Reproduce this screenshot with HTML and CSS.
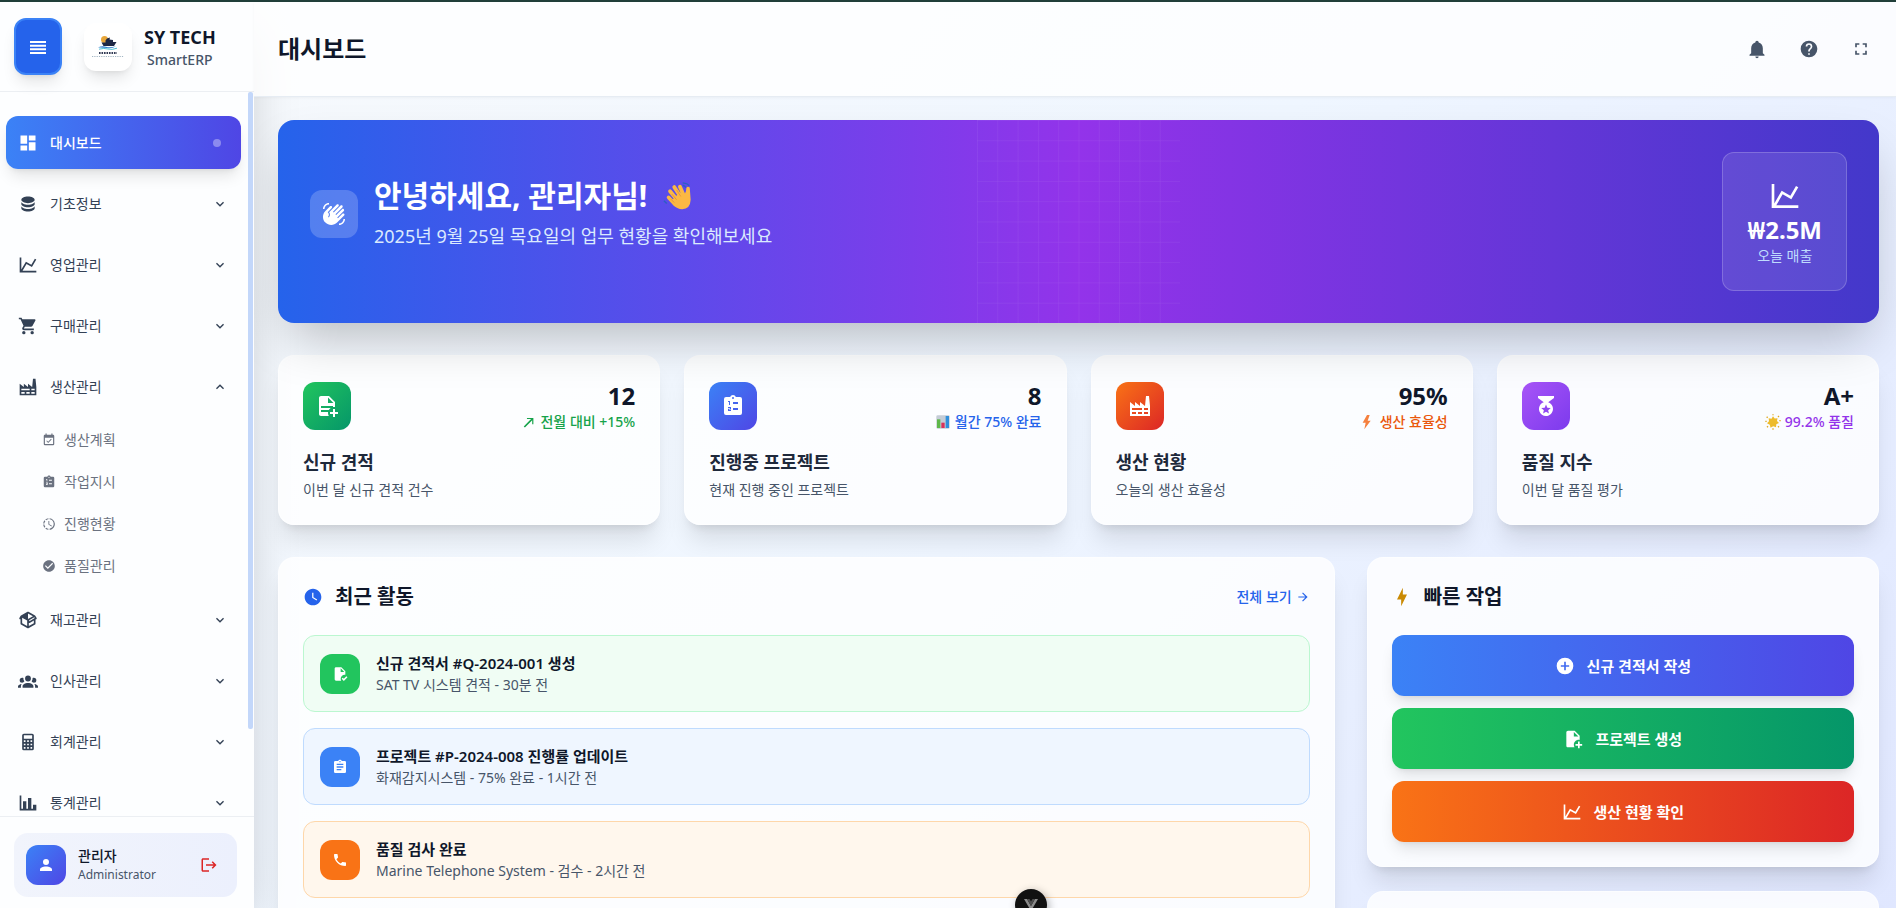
FILE: index.html
```html
<!DOCTYPE html>
<html lang="ko">
<head>
<meta charset="utf-8">
<title>SY TECH SmartERP</title>
<link rel="stylesheet" href="styles.css">
</head>
<body>
<svg class="sprite" aria-hidden="true">
  <symbol id="menu" viewBox="0 0 24 24"><path d="M0 3H24V6H0ZM0 8.500H24V11.500H0ZM0 14H24V17H0ZM0 19.500H24V22.500H0Z"/></symbol>
  <symbol id="dashboard" viewBox="0 0 24 24"><path d="M13,3V9H21V3M13,21H21V11H13M3,21H11V15H3M3,13H11V3H3V13Z"/></symbol>
  <symbol id="database" viewBox="0 0 24 24"><path d="M12,3C7.58,3 4,4.79 4,7C4,9.21 7.58,11 12,11C16.42,11 20,9.21 20,7C20,4.79 16.42,3 12,3M4,9V12C4,14.21 7.58,16 12,16C16.42,16 20,14.21 20,12V9C20,11.21 16.42,13 12,13C7.58,13 4,11.21 4,9M4,14V17C4,19.21 7.58,21 12,21C16.42,21 20,19.21 20,17V14C20,16.21 16.42,18 12,18C7.58,18 4,16.21 4,14Z"/></symbol>
  <symbol id="chart-line" viewBox="0 0 24 24"><path d="M16,11.78L20.24,4.45L21.97,5.45L16.74,14.5L10.23,10.75L5.46,19H22V21H2V3H4V17.54L9.5,8L16,11.78Z"/></symbol>
  <symbol id="cart" viewBox="0 0 24 24"><path d="M17,18C15.89,18 15,18.89 15,20A2,2 0 0,0 17,22A2,2 0 0,0 19,20C19,18.89 18.1,18 17,18M1,2V4H3L6.6,11.59L5.24,14.04C5.09,14.32 5,14.65 5,15A2,2 0 0,0 7,17H19V15H7.42A0.25,0.25 0 0,1 7.17,14.75C7.17,14.7 7.18,14.66 7.2,14.63L8.1,13H15.55C16.3,13 16.96,12.58 17.3,11.97L20.88,5.5C20.95,5.34 21,5.17 21,5A1,1 0 0,0 20,4H5.21L4.27,2M7,18C5.89,18 5,18.89 5,20A2,2 0 0,0 7,22A2,2 0 0,0 9,20C9,18.89 8.1,18 7,18Z"/></symbol>
  <symbol id="factory" viewBox="0 0 24 24"><path d="M4,18V20H8V18H4M4,14V16H14V14H4M10,18V20H14V18H10M16,14V16H20V14H16M16,18V20H20V18H16M2,22V8L7,12V8L12,12V8L17,12L18,2H21L22,12V22H2Z"/></symbol>
  <symbol id="calendar-check" viewBox="0 0 24 24"><path d="M19,19H5V8H19M19,3H18V1H16V3H8V1H6V3H5C3.89,3 3,3.9 3,5V19A2,2 0 0,0 5,21H19A2,2 0 0,0 21,19V5A2,2 0 0,0 19,3M16.53,11.06L15.47,10L10.59,14.88L8.47,12.76L7.41,13.82L10.59,17L16.53,11.06Z"/></symbol>
  <symbol id="clipboard-list" viewBox="0 0 24 24"><path fill-rule="evenodd" d="M19,3H14.82C14.4,1.84 13.3,1 12,1C10.7,1 9.6,1.84 9.18,3H5A2,2 0 0,0 3,5V19A2,2 0 0,0 5,21H19A2,2 0 0,0 21,19V5A2,2 0 0,0 19,3M12,3A1,1 0 0,1 13,4A1,1 0 0,1 12,5A1,1 0 0,1 11,4A1,1 0 0,1 12,3M7,7H9V11H8V8H7ZM7,13H10V15.5H8V16H10V17H7V14.800H9V14H7ZM12,8H17V10H12ZM12,14H17V16H12Z"/></symbol>
  <symbol id="progress-clock" viewBox="0 0 24 24"><path d="M13,2.03V2.05L13,4.05C17.39,4.59 20.5,8.58 19.96,12.97C19.5,16.61 16.64,19.5 13,19.93V21.93C18.5,21.38 22.5,16.5 21.95,11C21.5,6.25 17.73,2.5 13,2.03M11,2.06C9.05,2.25 7.19,3 5.67,4.26L7.1,5.74C8.22,4.84 9.57,4.26 11,4.06V2.06M4.26,5.67C3,7.19 2.25,9.04 2.05,11H4.05C4.24,9.58 4.8,8.23 5.69,7.1L4.26,5.67M2.06,13C2.26,14.96 3.03,16.81 4.27,18.33L5.69,16.9C4.81,15.77 4.24,14.42 4.06,13H2.06M7.1,18.37L5.67,19.74C7.18,21 9.04,21.79 11,22V20C9.58,19.82 8.23,19.25 7.1,18.37M12.5,7V12.25L17,14.92L16.25,16.15L11,13V7H12.5Z"/></symbol>
  <symbol id="check-circle" viewBox="0 0 24 24"><path d="M12 2C6.5 2 2 6.5 2 12S6.5 22 12 22 22 17.5 22 12 17.5 2 12 2M10 17L5 12L6.41 10.59L10 14.17L17.59 6.58L19 8L10 17Z"/></symbol>
  <symbol id="package" viewBox="0 0 24 24"><path d="M2,10.96C1.5,10.68 1.35,10.07 1.63,9.59L3.13,7C3.24,6.8 3.41,6.66 3.6,6.58L11.43,2.18C11.59,2.06 11.79,2 12,2C12.21,2 12.41,2.06 12.57,2.18L20.47,6.62C20.66,6.72 20.82,6.88 20.91,7.08L22.36,9.6C22.64,10.08 22.47,10.69 22,10.96L21,11.54V16.5C21,16.88 20.79,17.21 20.47,17.38L12.57,21.82C12.41,21.94 12.21,22 12,22C11.79,22 11.59,21.94 11.43,21.82L3.53,17.38C3.21,17.21 3,16.88 3,16.5V10.96C2.7,11.13 2.32,11.14 2,10.96M12,4.15V4.15L12,10.85V10.85L17.96,7.5L12,4.15M5,15.91L11,19.29V12.58L5,9.21V15.91M19,15.91V12.69L14,15.59C13.67,15.77 13.3,15.76 13,15.6V19.29L19,15.91M13.85,13.36L20.13,9.73L19.55,8.72L13.27,12.35L13.85,13.36Z"/></symbol>
  <symbol id="account-group" viewBox="0 0 24 24"><path d="M12,5.5A3.5,3.5 0 0,1 15.5,9A3.5,3.5 0 0,1 12,12.5A3.5,3.5 0 0,1 8.5,9A3.5,3.5 0 0,1 12,5.5M5,8C5.56,8 6.08,8.15 6.53,8.42C6.38,9.85 6.8,11.27 7.66,12.38C7.16,13.34 6.16,14 5,14A3,3 0 0,1 2,11A3,3 0 0,1 5,8M19,8A3,3 0 0,1 22,11A3,3 0 0,1 19,14C17.84,14 16.84,13.34 16.34,12.38C17.2,11.27 17.62,9.85 17.47,8.42C17.92,8.15 18.44,8 19,8M5.5,18.25C5.5,16.18 8.41,14.5 12,14.5C15.59,14.5 18.5,16.18 18.5,18.25V20H5.5V18.25M0,20V18.5C0,17.11 1.89,15.94 4.45,15.6C3.86,16.28 3.5,17.22 3.5,18.25V20H0M24,20H20.5V18.25C20.5,17.22 20.14,16.28 19.55,15.6C22.11,15.94 24,17.11 24,18.5V20Z"/></symbol>
  <symbol id="calculator" viewBox="0 0 24 24"><path d="M7,2H17A2,2 0 0,1 19,4V20A2,2 0 0,1 17,22H7A2,2 0 0,1 5,20V4A2,2 0 0,1 7,2M7,4V8H17V4H7M7,10V12H9V10H7M11,10V12H13V10H11M15,10V12H17V10H15M7,14V16H9V14H7M11,14V16H13V14H11M15,14V16H17V14H15M7,18V20H9V18H7M11,18V20H13V18H11M15,18V20H17V18H15Z"/></symbol>
  <symbol id="chart-bar" viewBox="0 0 24 24"><path d="M22,21H2V3H4V19H6V10H10V19H12V6H16V19H18V14H22V21Z"/></symbol>
  <symbol id="chevron-down" viewBox="0 0 24 24"><path d="M7.41,8.58L12,13.17L16.59,8.58L18,10L12,16L6,10L7.41,8.58Z"/></symbol>
  <symbol id="chevron-up" viewBox="0 0 24 24"><path d="M7.41,15.41L12,10.83L16.59,15.41L18,14L12,8L6,14L7.41,15.41Z"/></symbol>
  <symbol id="account" viewBox="0 0 24 24"><path d="M12,4A4,4 0 0,1 16,8A4,4 0 0,1 12,12A4,4 0 0,1 8,8A4,4 0 0,1 12,4M12,14C16.42,14 20,15.79 20,18V20H4V18C4,15.79 7.58,14 12,14Z"/></symbol>
  <symbol id="logout" viewBox="0 0 24 24"><path d="M17 7L15.59 8.41L18.17 11H8V13H18.17L15.59 15.58L17 17L22 12M4 5H12V3H4C2.9 3 2 3.9 2 5V19C2 20.1 2.9 21 4 21H12V19H4V5Z"/></symbol>
  <symbol id="bell" viewBox="0 0 24 24"><path d="M21,19V20H3V19L5,17V11C5,7.9 7.03,5.17 10,4.29C10,4.19 10,4.1 10,4A2,2 0 0,1 12,2A2,2 0 0,1 14,4C14,4.1 14,4.19 14,4.29C16.97,5.17 19,7.9 19,11V17L21,19M14,21A2,2 0 0,1 12,23A2,2 0 0,1 10,21"/></symbol>
  <symbol id="help" viewBox="0 0 24 24"><path d="M15.07,11.25L14.17,12.17C13.45,12.89 13,13.5 13,15H11V14.5C11,13.39 11.45,12.39 12.17,11.67L13.41,10.41C13.78,10.05 14,9.55 14,9C14,7.89 13.1,7 12,7A2,2 0 0,0 10,9H8A4,4 0 0,1 12,5A4,4 0 0,1 16,9C16,9.88 15.64,10.67 15.07,11.25M13,19H11V17H13M12,2A10,10 0 0,0 2,12A10,10 0 0,0 12,22A10,10 0 0,0 22,12C22,6.47 17.5,2 12,2Z"/></symbol>
  <symbol id="fullscreen" viewBox="0 0 24 24"><path d="M5,5H10V7H7V10H5V5M14,5H19V10H17V7H14V5M17,14H19V19H14V17H17V14M10,17V19H5V14H7V17H10Z"/></symbol>
  <symbol id="hand-wave" viewBox="0 0 24 24"><path d="M23 17c0 3.31-2.69 6-6 6v-1.5c2.48 0 4.5-2.02 4.5-4.5H23M1 7c0-3.31 2.69-6 6-6v1.5C4.52 2.5 2.5 4.52 2.5 7H1m7.01-2.68L3.41 8.92c-3.22 3.22-3.22 8.45 0 11.67s8.45 3.22 11.67 0l7.07-7.07c.49-.49.49-1.28 0-1.77-.49-.49-1.28-.49-1.77 0l-4.42 4.42-.71-.71 6.54-6.54c.49-.49.49-1.28 0-1.77s-1.28-.49-1.77 0l-5.83 5.84-.71-.71 6.89-6.89c.49-.49.49-1.28 0-1.77s-1.28-.49-1.77 0l-6.89 6.89-.7-.7 5.48-5.48c.49-.49.49-1.28 0-1.77s-1.28-.49-1.77 0l-7.62 7.62c1.22 1.57 1.11 3.84-.33 5.28l-.71-.71c1.17-1.17 1.17-3.07 0-4.24l-.35-.35 4.07-4.07c.49-.49.49-1.28 0-1.77-.49-.48-1.28-.48-1.77.01Z"/></symbol>
  <symbol id="document-plus" viewBox="0 0 24 24"><path d="M14 2H6C4.89 2 4 2.89 4 4V20C4 21.11 4.89 22 6 22H13.81C13.28 21.09 13 20.05 13 19C13 18.67 13.03 18.33 13.08 18H6V16H13.81C14.27 15.2 14.91 14.5 15.68 14H6V12H18V13.08C18.33 13.03 18.67 13 19 13S19.67 13.03 20 13.08V8L14 2M13 9V3.5L18.5 9H13M18 15V18H15V20H18V23H20V20H23V18H20V15H18Z"/></symbol>
  <symbol id="file-plus" viewBox="0 0 24 24"><path d="M14 2H6C4.89 2 4 2.89 4 4V20C4 21.11 4.89 22 6 22H13.81C13.28 21.09 13 20.05 13 19C13 15.69 15.69 13 19 13C19.34 13 19.67 13.03 20 13.08V8L14 2M13 9V3.5L18.5 9H13M23 20H20V23H18V20H15V18H18V15H20V18H23V20Z"/></symbol>
  <symbol id="file-check" viewBox="0 0 24 24"><path d="M14 2H6C4.89 2 4 2.89 4 4V20C4 21.11 4.89 22 6 22H13.81C13.28 21.09 13 20.05 13 19C13 15.69 15.69 13 19 13C19.34 13 19.67 13.03 20 13.08V8L14 2M13 9V3.5L18.5 9H13M17.750 22.500L14.500 19.200L16.160 17.500L17.750 19.100L21.600 15.200L23.200 17Z"/></symbol>
  <symbol id="medal" viewBox="0 0 24 24"><path d="M20,2H4V4L9.81,8.36C6.14,9.57 4.14,13.53 5.35,17.2C6.56,20.87 10.5,22.87 14.19,21.66C17.86,20.45 19.86,16.5 18.65,12.82C17.95,10.71 16.3,9.05 14.19,8.36L20,4V2M14.94,19.5L12,17.78L9.06,19.5L9.84,16.17L7.25,13.93L10.66,13.64L12,10.5L13.34,13.64L16.75,13.93L14.16,16.17L14.94,19.5Z"/></symbol>
  <symbol id="clock" viewBox="0 0 24 24"><path d="M12 2C6.5 2 2 6.5 2 12C2 17.5 6.5 22 12 22C17.5 22 22 17.5 22 12S17.5 2 12 2M16.2 16.2L11 13V7H12.5V12.2L17 14.9L16.2 16.2Z"/></symbol>
  <symbol id="bolt" viewBox="0 0 24 24"><path d="M11 15H6L13 1V9H18L11 23V15Z"/></symbol>
  <symbol id="clipboard-text" viewBox="0 0 24 24"><path d="M17,9H7V7H17M17,13H7V11H17M14,17H7V15H14M12,3A1,1 0 0,1 13,4A1,1 0 0,1 12,5A1,1 0 0,1 11,4A1,1 0 0,1 12,3M19,3H14.82C14.4,1.84 13.3,1 12,1C10.7,1 9.6,1.84 9.18,3H5A2,2 0 0,0 3,5V19A2,2 0 0,0 5,21H19A2,2 0 0,0 21,19V5A2,2 0 0,0 19,3Z"/></symbol>
  <symbol id="phone" viewBox="0 0 24 24"><path d="M6.62,10.79C8.06,13.62 10.38,15.94 13.21,17.38L15.41,15.18C15.69,14.9 16.08,14.82 16.43,14.93C17.55,15.3 18.75,15.5 20,15.5A1,1 0 0,1 21,16.5V20A1,1 0 0,1 20,21A17,17 0 0,1 3,4A1,1 0 0,1 4,3H7.5A1,1 0 0,1 8.5,4C8.5,5.25 8.7,6.45 9.07,7.57C9.18,7.92 9.1,8.31 8.82,8.59L6.62,10.79Z"/></symbol>
  <symbol id="plus-circle" viewBox="0 0 24 24"><path d="M17,13H13V17H11V13H7V11H11V7H13V11H17M12,2A10,10 0 0,0 2,12A10,10 0 0,0 12,22A10,10 0 0,0 22,12A10,10 0 0,0 12,2Z"/></symbol>
  <symbol id="arrow-right" viewBox="0 0 24 24"><path d="M4,11V13H16L10.5,18.5L11.92,19.92L19.84,12L11.92,4.08L10.5,5.5L16,11H4Z"/></symbol>
  <symbol id="arrow-up-right" viewBox="0 0 24 24"><path d="M3 19.500L15.500 7H8.500V5H19.500V16H17.500V9L5 21.500Z"/></symbol>
  <symbol id="chart-color" viewBox="0 0 24 24"><rect x="2" y="2" width="20" height="20" rx="2" fill="#c4ccd6"/><rect x="3" y="8" width="5" height="13" fill="#5fb84a"/><rect x="9.500" y="13" width="5" height="8" fill="#d8325a"/><rect x="16" y="3" width="5" height="18" fill="#2f8fdc"/></symbol>
  <symbol id="bolt-color" viewBox="0 0 24 24"><path d="M10.500 1.500L4 13H8.500L6.500 23L16 10H11.500L14.500 1.500Z" fill="#f5803e"/></symbol>
  <symbol id="star-color" viewBox="0 0 24 24"><path d="M12 3.500L14.500 6.800L18.800 6.200L18 10.400L21 13.500L17 15.500L16.500 20L12.300 18.300L8.300 20.500L7.200 16L3 14L6 10.800L5.500 6.300L9.800 7Z" fill="#edbb2c"/><path d="M12 .5V2M12 21.500V23.500M.5 11H2.500M21.500 10H23.500M2.500 4L4 5.500M19.500 18.500L21 20M3 20L4.500 18.500M19.500 4.500L21 3" stroke="#dfa922" stroke-width="2" fill="none"/></symbol>
</svg>

<div class="strip"></div>
<div class="app">
  <aside class="sidebar">
    <header class="brand">
      <button class="menu-btn" type="button" aria-label="메뉴"><svg class="i16"><use href="#menu"/></svg></button>
      <div class="brand-logo">
        <svg class="logo-art" viewBox="0 0 36 24" aria-hidden="true">
          <circle cx="14.500" cy="4.500" r="3.500" fill="#e7a63a"/>
          <path d="M15.500 5.500L17 3.500L20 2.500L19.500 4.500L23 5V7H26.500L24 11H13.500L11.500 7.500H15.500Z" fill="#1d2745"/>
          <path d="M8 12.500Q12 10.500 16 11.800T26 11.300Q22 13.800 17 13T8 12.500Z" fill="#2f7fd0"/>
          <path d="M9 14.200Q14 12.800 18 14T27 13.200" stroke="#4fc0d4" stroke-width="1" fill="none"/>
          <path d="M9 18H27" stroke="#333b55" stroke-width="2" stroke-dasharray="1.600 .9"/>
          <path d="M2 21.500H34" stroke="#a3b6c4" stroke-width="1.200" stroke-dasharray="1.200 1.100"/>
        </svg>
      </div>
      <div class="brand-text"><strong>SY TECH</strong><span>SmartERP</span></div>
    </header>

    <div class="nav-wrap">
      <nav class="nav">
        <a class="nav-item active" href="#"><svg class="i20"><use href="#dashboard"/></svg><span>대시보드</span><i class="dot"></i></a>
        <a class="nav-item" href="#"><svg class="i20"><use href="#database"/></svg><span>기초정보</span><svg class="i16"><use href="#chevron-down"/></svg></a>
        <a class="nav-item" href="#"><svg class="i20"><use href="#chart-line"/></svg><span>영업관리</span><svg class="i16"><use href="#chevron-down"/></svg></a>
        <a class="nav-item" href="#"><svg class="i20"><use href="#cart"/></svg><span>구매관리</span><svg class="i16"><use href="#chevron-down"/></svg></a>
        <a class="nav-item" href="#"><svg class="i20"><use href="#factory"/></svg><span>생산관리</span><svg class="i16"><use href="#chevron-up"/></svg></a>
        <div class="subnav">
          <a href="#"><svg class="i14"><use href="#calendar-check"/></svg>생산계획</a>
          <a href="#"><svg class="i14"><use href="#clipboard-list"/></svg>작업지시</a>
          <a href="#"><svg class="i14"><use href="#progress-clock"/></svg>진행현황</a>
          <a href="#"><svg class="i14"><use href="#check-circle"/></svg>품질관리</a>
        </div>
        <a class="nav-item" href="#"><svg class="i20"><use href="#package"/></svg><span>재고관리</span><svg class="i16"><use href="#chevron-down"/></svg></a>
        <a class="nav-item" href="#"><svg class="i20"><use href="#account-group"/></svg><span>인사관리</span><svg class="i16"><use href="#chevron-down"/></svg></a>
        <a class="nav-item" href="#"><svg class="i20"><use href="#calculator"/></svg><span>회계관리</span><svg class="i16"><use href="#chevron-down"/></svg></a>
        <a class="nav-item" href="#"><svg class="i20"><use href="#chart-bar"/></svg><span>통계관리</span><svg class="i16"><use href="#chevron-down"/></svg></a>
      </nav>
      <div class="scroll-track"><div class="scroll-thumb"></div></div>
    </div>

    <footer class="side-foot">
      <div class="user">
        <div class="avatar"><svg class="i18"><use href="#account"/></svg></div>
        <div class="user-text"><strong>관리자</strong><span>Administrator</span></div>
        <button class="logout" type="button" aria-label="로그아웃"><svg class="i18"><use href="#logout"/></svg></button>
      </div>
    </footer>
  </aside>

  <div class="page">
    <header class="topbar">
      <h1>대시보드</h1>
      <div class="tools">
        <button type="button" aria-label="알림"><svg class="i20"><use href="#bell"/></svg></button>
        <button type="button" aria-label="도움말"><svg class="i20"><use href="#help"/></svg></button>
        <button type="button" aria-label="전체 화면"><svg class="i20"><use href="#fullscreen"/></svg></button>
      </div>
    </header>

    <main class="content">
      <section class="hero">
        <svg class="hero-grid" viewBox="0 0 100 100" aria-hidden="true">
          <defs><pattern id="grid" width="10" height="10" patternUnits="userSpaceOnUse"><path d="M10 0H0V10" fill="none" stroke="#fff" stroke-width=".5"/></pattern></defs>
          <rect width="100" height="100" fill="url(#grid)"/>
        </svg>
        <div class="hero-main">
          <div class="hero-icon"><svg class="i24"><use href="#hand-wave"/></svg></div>
          <div>
            <h2>안녕하세요, 관리자님!
              <svg class="wave" viewBox="0 0 32 32" aria-hidden="true">
                <g stroke="#fbb843" stroke-linecap="round">
                  <path d="M7.500 11L15 20M12 6.500L19 17M18 6L22 15" stroke-width="4"/>
                  <path d="M6 17.500L13 25" stroke-width="4"/>
                </g>
                <path d="M10 20L18 12L23 14.500Q25 11 25 7Q26.500 5 28.500 7L29.500 20Q29 30 20.500 30Q15 30 10.500 25Z" fill="#fbb843"/>
                <path d="M9.500 14L14.500 20M14.500 9.500L19 16.500M8 19L12 23" stroke="#e08d32" stroke-width=".8"/>
                <path d="M21 2Q26 2.500 28 5M21 4.500Q23 5 24.500 7" stroke="#2c5fc4" stroke-width="1.500" fill="none"/>
                <path d="M1 21L4 24" stroke="#2c5fc4" stroke-width="1.500"/>
              </svg>
            </h2>
            <p>2025년 9월 25일 목요일의 업무 현황을 확인해보세요</p>
          </div>
        </div>
        <div class="hero-stat">
          <div class="hero-stat-icon"><svg class="i32"><use href="#chart-line"/></svg></div>
          <strong>₩2.5M</strong>
          <span>오늘 매출</span>
        </div>
      </section>

      <section class="stats">
        <article class="card stat green">
          <div class="stat-top"><div class="stat-icon"><svg class="i24"><use href="#document-plus"/></svg></div>
            <div class="stat-num"><strong>12</strong><span><svg class="i14"><use href="#arrow-up-right"/></svg>전월 대비 +15%</span></div></div>
          <h3>신규 견적</h3><p>이번 달 신규 견적 건수</p>
        </article>
        <article class="card stat blue">
          <div class="stat-top"><div class="stat-icon"><svg class="i24"><use href="#clipboard-list"/></svg></div>
            <div class="stat-num"><strong>8</strong><span><svg class="i16"><use href="#chart-color"/></svg>월간 75% 완료</span></div></div>
          <h3>진행중 프로젝트</h3><p>현재 진행 중인 프로젝트</p>
        </article>
        <article class="card stat orange">
          <div class="stat-top"><div class="stat-icon"><svg class="i24"><use href="#factory"/></svg></div>
            <div class="stat-num"><strong>95%</strong><span><svg class="i16"><use href="#bolt-color"/></svg>생산 효율성</span></div></div>
          <h3>생산 현황</h3><p>오늘의 생산 효율성</p>
        </article>
        <article class="card stat purple">
          <div class="stat-top"><div class="stat-icon"><svg class="i24"><use href="#medal"/></svg></div>
            <div class="stat-num"><strong>A+</strong><span><svg class="i16"><use href="#star-color"/></svg>99.2% 품질</span></div></div>
          <h3>품질 지수</h3><p>이번 달 품질 평가</p>
        </article>
      </section>

      <section class="lower">
        <article class="card panel recent">
          <header class="panel-head"><svg class="i20 c-blue"><use href="#clock"/></svg><h2>최근 활동</h2><a href="#">전체 보기<svg class="i14"><use href="#arrow-right"/></svg></a></header>
          <ul class="activity">
            <li class="green"><div class="act-icon"><svg class="i16"><use href="#file-check"/></svg></div><div><strong>신규 견적서 #Q-2024-001 생성</strong><span>SAT TV 시스템 견적 - 30분 전</span></div></li>
            <li class="blue"><div class="act-icon"><svg class="i16"><use href="#clipboard-text"/></svg></div><div><strong>프로젝트 #P-2024-008 진행률 업데이트</strong><span>화재감지시스템 - 75% 완료 - 1시간 전</span></div></li>
            <li class="orange"><div class="act-icon"><svg class="i16"><use href="#phone"/></svg></div><div><strong>품질 검사 완료</strong><span>Marine Telephone System - 검수 - 2시간 전</span></div></li>
          </ul>
        </article>
        <div class="side-col">
          <article class="card panel">
            <header class="panel-head"><svg class="i20 c-gold"><use href="#bolt"/></svg><h2>빠른 작업</h2></header>
            <div class="actions">
              <button class="blue" type="button"><svg class="i20"><use href="#plus-circle"/></svg>신규 견적서 작성</button>
              <button class="green" type="button"><svg class="i20"><use href="#file-plus"/></svg>프로젝트 생성</button>
              <button class="orange" type="button"><svg class="i20"><use href="#chart-line"/></svg>생산 현황 확인</button>
            </div>
          </article>
          <article class="card panel next"></article>
        </div>
      </section>
    </main>
  </div>
</div>

<button class="devtools" type="button" aria-label="개발자 도구">
  <svg viewBox="0 0 16 16" class="i16"><path d="M1 2H4L8 9L12 2H15L8 14Z" fill="#8b8b8b"/><path d="M4 2H6.500L8 4.500L9.500 2H12L8 9Z" fill="#4f4f4f"/></svg>
</button>
</body>
</html>
```

FILE: styles.css
```css
* { box-sizing: border-box; }

body {
  margin: 0;
  height: 100vh;
  overflow: hidden;
  display: flex;
  flex-direction: column;
  font-family: "Noto Sans", "Noto Sans CJK KR", sans-serif;
  font-size: 14px;
  line-height: 20px;
  color: #0f172a;
  background: linear-gradient(135deg, #f8fafc 0%, #eff6ff 50%, #e0e7ff 100%);
}

h1, h2, h3, p, ul { margin: 0; padding: 0; }
a { color: inherit; text-decoration: none; }
button { font: inherit; border: 0; padding: 0; background: none; cursor: pointer; }
svg { display: block; flex: none; fill: currentColor; }
strong, span { display: block; }

.sprite { position: absolute; width: 0; height: 0; }
.i14 { width: 14px; height: 14px; }
.i16 { width: 16px; height: 16px; }
.i18 { width: 18px; height: 18px; }
.i20 { width: 20px; height: 20px; }
.i24 { width: 24px; height: 24px; }
.i32 { width: 32px; height: 32px; }

.strip { flex: none; height: 2px; background: #213f3a; }
.app { flex: 1; min-height: 0; display: flex; }

/* Sidebar */
.sidebar {
  flex: none;
  width: 254px;
  display: flex;
  flex-direction: column;
  background: #fdfeff;
  box-shadow: 0 25px 50px -12px rgba(0, 0, 0, 0.25);
}
.brand {
  flex: none;
  height: 90px;
  padding: 0 14px;
  display: flex;
  align-items: center;
  border-bottom: 1px solid #eceff3;
}
.menu-btn {
  width: 48px;
  height: 57px;
  display: grid;
  place-items: center;
  border: 2px solid #3b82f6;
  border-radius: 12px;
  background: #2563eb;
  color: #fff;
  box-shadow: 0 10px 15px -3px rgba(0, 0, 0, 0.1), 0 4px 6px -4px rgba(0, 0, 0, 0.1);
}
.brand-logo {
  width: 48px;
  height: 48px;
  margin: 0 12px 0 22px;
  display: grid;
  place-items: center;
  border-radius: 12px;
  background: #fff;
  box-shadow: 0 10px 15px -3px rgba(0, 0, 0, 0.1), 0 4px 6px -4px rgba(0, 0, 0, 0.1);
}
.logo-art { width: 36px; height: 24px; }
.brand-text { text-align: center; padding-top: 3px; }
.brand-text strong { font-size: 18px; line-height: 24px; }
.brand-text span { font-weight: 500; color: #475569; line-height: 22px; }

.nav-wrap { flex: 1; min-height: 0; display: flex; overflow: hidden; }
.nav {
  flex: 1;
  padding: 24px 7px 24px 6px;
  display: flex;
  flex-direction: column;
  gap: 8px;
}
.nav-item {
  flex: none;
  height: 53px;
  padding: 0 13px 0 12px;
  display: flex;
  align-items: center;
  gap: 12px;
  border-radius: 12px;
  color: #334155;
}
.nav-item span { flex: 1; }
.nav-item.active {
  color: #fff;
  font-weight: 500;
  background: linear-gradient(90deg, #3b82f6, #4f46e5);
  box-shadow: 0 10px 15px -3px rgba(0, 0, 0, 0.1), 0 4px 6px -4px rgba(0, 0, 0, 0.1);
}
.dot { width: 8px; height: 8px; margin-right: 7px; border-radius: 50%; background: rgba(255, 255, 255, 0.35); }
.subnav { display: flex; flex-direction: column; gap: 4px; padding-left: 36px; }
.subnav a { height: 38px; display: flex; align-items: center; gap: 8px; color: #6b7280; }
.scroll-track { flex: none; width: 5px; margin-right: 1px; }
.scroll-thumb { height: 88%; border-radius: 2px; background: #c3d7fa; }

.side-foot { flex: none; padding: 16px 17px 11px 14px; border-top: 1px solid #eceff3; }
.user {
  height: 64px;
  padding: 0 16px 0 12px;
  display: flex;
  align-items: center;
  gap: 12px;
  border-radius: 14px;
  background: linear-gradient(90deg, #f1f4fc, #ecf0fd);
}
.avatar {
  width: 40px;
  height: 40px;
  display: grid;
  place-items: center;
  border-radius: 12px;
  color: #fff;
  background: linear-gradient(135deg, #3b82f6, #4f46e5);
}
.user-text { flex: 1; }
.user-text strong { font-weight: 500; }
.user-text span { font-size: 12px; line-height: 18px; color: #475569; }
.logout { width: 24px; height: 26px; display: grid; place-items: center; color: #dc2626; }

/* Top bar */
.page { flex: 1; min-width: 0; display: flex; flex-direction: column; }
.topbar {
  flex: none;
  height: 95px;
  padding: 0 13px 0 24px;
  display: flex;
  align-items: center;
  justify-content: space-between;
  background: rgba(255, 255, 255, 0.8);
  border-bottom: 1px solid #e6ecf3;
  box-shadow: 0 1px 3px rgba(0, 0, 0, 0.04);
}
.topbar h1 { font-size: 24px; line-height: 32px; }
.tools { display: flex; gap: 8px; color: #475569; }
.tools button { width: 44px; height: 44px; display: grid; place-items: center; color: inherit; }

.content {
  flex: 1;
  min-height: 0;
  overflow: hidden;
  padding: 23px 17px 24px 24px;
  display: flex;
  flex-direction: column;
  gap: 32px;
}
.content > * { flex: none; }

/* Hero banner */
.hero {
  position: relative;
  padding: 32px;
  display: flex;
  align-items: center;
  justify-content: space-between;
  border-radius: 16px;
  color: #fff;
  background: linear-gradient(90deg, #2563eb 0%, #9333ea 50%, #4338ca 100%);
  box-shadow: 0 25px 50px -12px rgba(0, 0, 0, 0.25);
}
.hero-grid { position: absolute; inset: 0; width: 100%; height: 100%; opacity: 0.1; }
.hero-main { display: flex; align-items: center; gap: 16px; margin-bottom: 16px; }
.hero-icon {
  width: 48px;
  height: 48px;
  display: grid;
  place-items: center;
  border-radius: 12px;
  background: rgba(255, 255, 255, 0.2);
}
.hero h2 { display: flex; align-items: center; gap: 16px; font-size: 30px; line-height: 36px; margin-bottom: 8px; }
.wave { width: 30px; height: 30px; }
.hero p { font-size: 18px; line-height: 28px; color: #dbeafe; }
.hero-stat {
  padding: 24px;
  border: 1px solid rgba(255, 255, 255, 0.2);
  border-radius: 12px;
  text-align: center;
  background: rgba(255, 255, 255, 0.1);
}
.hero-stat-icon { height: 37px; display: grid; place-items: center; }
.hero-stat strong { font-size: 24px; line-height: 32px; }
.hero-stat span { color: #bfdbfe; }

/* Cards */
.card {
  border: 1px solid rgba(255, 255, 255, 0.5);
  border-radius: 16px;
  background: rgba(255, 255, 255, 0.8);
  box-shadow: 0 20px 25px -5px rgba(0, 0, 0, 0.1), 0 8px 10px -6px rgba(0, 0, 0, 0.1);
}
.stats { display: grid; grid-template-columns: repeat(4, 1fr); gap: 24px; }
.stat { padding: 24px; }
.stat-top { display: flex; align-items: center; justify-content: space-between; margin-bottom: 16px; }
.stat-icon {
  width: 48px;
  height: 48px;
  display: grid;
  place-items: center;
  border-radius: 12px;
  color: #fff;
}
.stat-num { text-align: right; }
.stat-num strong { font-size: 24px; line-height: 32px; }
.stat-num span { display: flex; align-items: center; justify-content: flex-end; gap: 4px; font-weight: 500; }
.stat h3 { font-size: 18px; line-height: 28px; margin-bottom: 4px; color: #1e293b; }
.stat p { color: #475569; }
.stat.green .stat-icon { background: linear-gradient(135deg, #22c55e, #059669); }
.stat.blue .stat-icon { background: linear-gradient(135deg, #3b82f6, #4f46e5); }
.stat.orange .stat-icon { background: linear-gradient(135deg, #f97316, #dc2626); }
.stat.purple .stat-icon { background: linear-gradient(135deg, #a855f7, #7c3aed); }
.stat.green .stat-num span { color: #16a34a; }
.stat.blue .stat-num span { color: #2563eb; }
.stat.orange .stat-num span { color: #ea580c; }
.stat.purple .stat-num span { color: #9333ea; }

/* Lower panels */
.lower { display: grid; grid-template-columns: repeat(3, 1fr); gap: 32px; }
.recent { grid-column: span 2; }
.side-col { display: flex; flex-direction: column; gap: 24px; }
.panel { padding: 25px 24px 24px; }
.panel.next { min-height: 200px; }
.panel-head { display: flex; align-items: center; gap: 12px; margin-bottom: 24px; }
.panel-head h2 { flex: 1; font-size: 20px; line-height: 28px; }
.panel-head a { display: flex; align-items: center; gap: 4px; font-weight: 500; color: #2563eb; }
.c-blue { color: #2563eb; }
.c-gold { color: #ca8a04; }

.activity { list-style: none; display: flex; flex-direction: column; gap: 16px; }
.activity li { display: flex; align-items: center; gap: 16px; padding: 16px; border: 1px solid; border-radius: 12px; }
.activity strong { font-size: 15px; line-height: 23px; font-weight: 600; }
.activity span { color: #475569; }
.act-icon { width: 40px; height: 40px; display: grid; place-items: center; border-radius: 12px; color: #fff; }
.activity .green { background: #f0fdf4; border-color: #bbf7d0; }
.activity .blue { background: #eff6ff; border-color: #bfdbfe; }
.activity .orange { background: #fff7ed; border-color: #fed7aa; }
.green .act-icon { background: #22c55e; }
.blue .act-icon { background: #3b82f6; }
.orange .act-icon { background: #f97316; }

.actions { display: flex; flex-direction: column; gap: 12px; }
.actions button {
  height: 61px;
  display: flex;
  align-items: center;
  justify-content: center;
  gap: 12px;
  border-radius: 12px;
  font-size: 15px;
  font-weight: 700;
  color: #fff;
  box-shadow: 0 10px 15px -3px rgba(0, 0, 0, 0.1), 0 4px 6px -4px rgba(0, 0, 0, 0.1);
}
.actions .blue { background: linear-gradient(90deg, #3b82f6, #4f46e5); }
.actions .green { background: linear-gradient(90deg, #22c55e, #059669); }
.actions .orange { background: linear-gradient(90deg, #f97316, #dc2626); }

/* Floating developer button, half below the window's edge */
.devtools {
  position: fixed;
  left: calc(50% + 67px);
  bottom: -13px;
  width: 32px;
  height: 32px;
  display: grid;
  place-items: center;
  border-radius: 50%;
  background: #111;
  box-shadow: 2px 2px 8px rgba(0, 0, 0, 0.3);
}
```
